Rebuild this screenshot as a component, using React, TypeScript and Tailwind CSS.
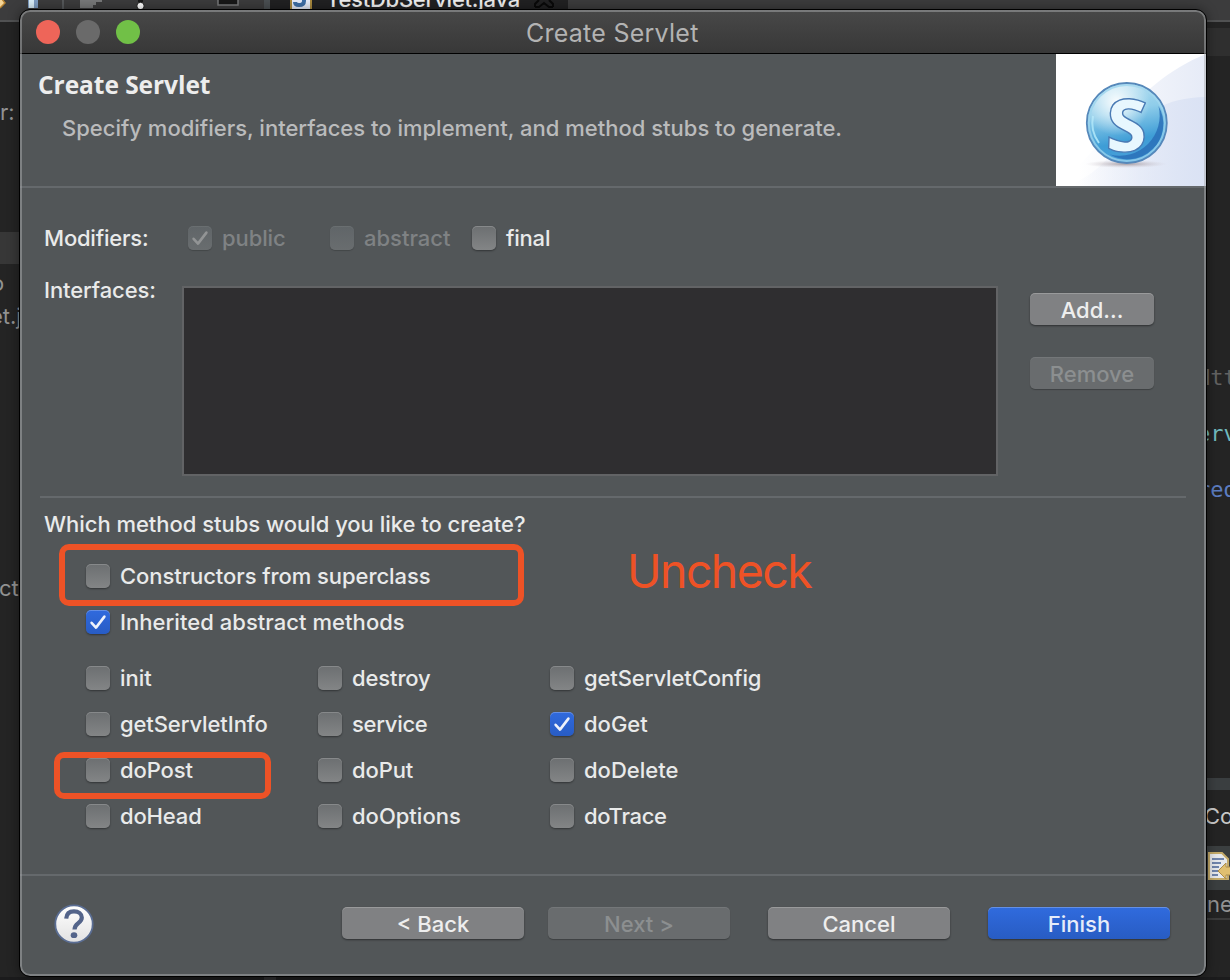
import type { ReactNode } from "react";

type Tone = "normal" | "disabled";

function Checkbox({ label, checked = false, tone = "normal", track = "" }: { label: string; checked?: boolean; tone?: Tone; track?: string }) {
  const off = tone === "disabled";
  const fill = off
    ? "bg-linear-to-b from-[#606568] to-[#696d6f] shadow-[0_1px_1px_rgba(0,0,0,0.18),inset_0_1px_0_rgba(255,255,255,0.06)]"
    : checked
      ? "bg-linear-to-b from-[#306ade] to-[#285cc4] shadow-[0_1px_2px_rgba(0,0,0,0.4),inset_0_1px_0_rgba(255,255,255,0.25)]"
      : "bg-linear-to-b from-[#6c6f71] to-[#838586] shadow-[0_1px_2px_rgba(0,0,0,0.4),inset_0_1px_0_rgba(255,255,255,0.18)]";
  return (
    <label className="flex h-6 items-center gap-[10px] whitespace-nowrap">
      <span className={`flex size-6 shrink-0 items-center justify-center rounded-[5px] ${fill}`}>
        {checked && (
          <svg viewBox="0 0 24 24" className="size-6" fill="none" stroke={off ? "#929495" : "#eef2fb"} strokeWidth="2.6" strokeLinecap="round" strokeLinejoin="round">
            <path d="M5.6 12.8 10 17.6 18.4 6.6" />
          </svg>
        )}
      </span>
      <span className={`${off ? "text-[#7f8284]" : "text-[#e9eaea]"} ${track}`}>{label}</span>
    </label>
  );
}

function Button({ children, kind = "normal", className = "" }: { children: ReactNode; kind?: "normal" | "disabled" | "primary"; className?: string }) {
  const look =
    kind === "primary"
      ? "bg-linear-to-b from-[#306bde] to-[#285cc3] text-[#e6ecf9] shadow-[0_1px_2px_rgba(0,0,0,0.45),inset_0_1px_0_rgba(255,255,255,0.25)]"
      : kind === "disabled"
        ? "bg-[#696c6e] text-[#8c8f90] shadow-[0_1px_1px_rgba(0,0,0,0.25),inset_0_1px_0_rgba(255,255,255,0.08)]"
        : "bg-[#808183] text-[#eeeeee] shadow-[0_1px_2px_rgba(0,0,0,0.45),inset_0_1px_0_rgba(255,255,255,0.2)]";
  return <button className={`flex h-8 items-center justify-center rounded-[5px] pt-px ${look} ${className}`}>{children}</button>;
}

function ServletBanner() {
  return (
    <svg viewBox="0 0 150 132" className="h-[132px] w-[150px] shrink-0">
      <defs>
        <linearGradient id="sweep" x1="0" x2="1" y1="0" y2="0">
          <stop offset="0.05" stopColor="#dce4f5" stopOpacity="0" />
          <stop offset="1" stopColor="#dae2f4" />
        </linearGradient>
        <linearGradient id="sweep2" x1="0" x2="1" y1="0" y2="0">
          <stop offset="0.15" stopColor="#e4e9f6" stopOpacity="0" />
          <stop offset="1" stopColor="#e6ebf7" />
        </linearGradient>
        <linearGradient id="ball" x1="0.4" x2="0.6" y1="0" y2="1">
          <stop offset="0" stopColor="#b5dff1" />
          <stop offset="0.35" stopColor="#8fcdea" />
          <stop offset="0.72" stopColor="#3e9dd6" />
          <stop offset="1" stopColor="#4b9fd8" />
        </linearGradient>
        <radialGradient id="gloss" cx="0.36" cy="0.22" r="0.45">
          <stop offset="0" stopColor="#fff" stopOpacity="0.95" />
          <stop offset="1" stopColor="#fff" stopOpacity="0" />
        </radialGradient>
        <radialGradient id="shade">
          <stop offset="0" stopColor="#8f8186" stopOpacity="0.75" />
          <stop offset="1" stopColor="#c8bfc6" stopOpacity="0" />
        </radialGradient>
      </defs>
      <rect width="150" height="132" fill="#fff" />
      <path d="M0 132C45 100 75 30 150 0V132Z" fill="url(#sweep2)" />
      <path d="M10 132C75 110 65 44 150 43V132Z" fill="url(#sweep)" />
      <ellipse cx="70" cy="110" rx="41" ry="4" fill="url(#shade)" />
      <circle cx="70.800" cy="69" r="40" fill="url(#ball)" stroke="#5688ba" strokeWidth="1.800" />
      <circle cx="70.800" cy="69" r="38" fill="none" stroke="#a5d8ef" strokeWidth="2" strokeOpacity="0.700" />
      <path d="M102.500 52A35.500 35.500 0 0 1 54 100.500A40 40 0 0 0 102.500 52Z" fill="#2a70b8" fillOpacity="0.850" />
      <path d="M37 62A34 34 0 0 0 43 89" fill="none" stroke="#a6e1f6" strokeWidth="2" />
      <circle cx="70.800" cy="69" r="37" fill="url(#gloss)" />
      <text x="70.800" y="97.500" textAnchor="middle" fontSize="73" fontWeight="800" transform="rotate(2 71 70)" fill="#e8f7fe" stroke="#497ab4" strokeWidth="1.400" fontFamily="Noto Sans, sans-serif">S</text>
    </svg>
  );
}

function Backdrop() {
  return (
    <div className="absolute inset-0 flex flex-col overflow-hidden bg-[#242424] text-[22px] text-[#929292]">
      <div className="flex h-[22px] shrink-0 border-b-2 border-[#515253] bg-[#3c3c3d]">
        <svg viewBox="0 0 270 10" className="h-[10px] w-[270px]">
          <path d="M-4-3 2-1 5 3 0 8" fill="#f5d598" stroke="#b68230" strokeWidth="1.500" />
          <path d="M28 0h10v8H28z" fill="#7e9cc0" />
          <path d="M29 0h5v8h-5z" fill="#d8ecf6" />
          <path d="M62 0h2v10h-2z" fill="#55585a" />
          <path d="M80 0h22v2h-6v3h-3v3H80z" fill="#777879" />
          <path d="M138 0h5v4h-5z" fill="#171717" />
          <circle cx="140.500" cy="6" r="3.700" fill="#fff" stroke="#171717" />
          <path d="M218-8h20V5h-20z" fill="#171717" stroke="#77787a" strokeWidth="1.500" />
          <path d="M264 0h6v10h-6z" fill="#4a4f52" />
        </svg>
        <div className="flex h-[10px] w-[298px] bg-[#212122]">
          <svg viewBox="0 0 50 10" className="h-[10px] w-[50px] shrink-0">
            <path d="M21-8h20V20H21z" fill="#e8eefa" stroke="#a8893e" strokeWidth="2" />
            <path d="M34-6V1q0 4-5 4-4 0-4-3" fill="none" stroke="#3f6fa6" strokeWidth="4" />
          </svg>
          <span className="mt-[-15px] ml-[6px] h-7 w-[194px] shrink-0 font-medium tracking-[-0.25px] whitespace-nowrap text-[#f0f0f0]">TestDbServlet.java</span>
          <svg viewBox="0 0 20 10" className="ml-[14px] h-[10px] w-5 shrink-0">
            <path d="M1 7V4L5 0M19 7V4L15 0M1 7h4l5-4 5 4h4" fill="none" stroke="#090909" strokeWidth="2" />
          </svg>
        </div>
      </div>
      <div className="flex flex-1 justify-between">
        <div className="flex w-5 flex-col overflow-hidden whitespace-nowrap">
          <span className="mt-[76px] h-7 leading-7">r:</span>
          <div className="mt-[106px] h-8 bg-[#373737]" />
          <span className="mt-[5px] -ml-[9px] h-7 leading-7">o</span>
          <span className="mt-[5px] -ml-[10px] h-7 leading-7">et.java</span>
          <span className="mt-[244px] -ml-px h-7 leading-7">ct</span>
        </div>
        <div className="flex w-6 flex-col overflow-hidden whitespace-nowrap">
          <div className="h-[6px] shrink-0 bg-[#242424]" />
          <div className="h-7 shrink-0 bg-[#2f2f2f]" />
          <div className="mt-[308px] -ml-[9px] h-[166px] shrink-0 font-['DejaVu_Sans_Mono',monospace] leading-7">
            <div className="h-14 text-[#626262]">Http</div>
            <div className="h-14 text-[#70b9be]">erv</div>
            <div className="h-14 text-[#5c7dc1]">red</div>
          </div>
          <div className="mt-[248px] h-3 shrink-0 bg-[#3a3e40]" />
          <div className="mt-3 -ml-[2px] h-7 shrink-0 leading-7 text-[#c8c8c8]">Co</div>
          <div className="mt-4 h-11 shrink-0 bg-[#3b3f40]">
            <svg viewBox="0 0 24 44" className="h-11 w-6">
              <path d="M3 7h13l6 6v20H3z" fill="#e7e9ec" stroke="#c4aa69" strokeWidth="2" />
              <path d="M6 13h12M6 17h9M6 21h7M6 25h7M6 29h6" stroke="#6f84ac" strokeWidth="2" />
              <path d="m12 25 8-8v4h7v8h-7v4z" fill="#e0bf70" stroke="#ac8c4b" />
            </svg>
          </div>
          <div className="h-[30px] shrink-0 border-b-2 border-[#3b3b3b] pl-px leading-7">ne</div>
        </div>
      </div>
      <div className="h-[3px] shrink-0 bg-[#1b1b1c] pl-[264px]">
        <div className="h-full w-3 bg-[#2c2c2d]" />
      </div>
    </div>
  );
}

const stubs = [
  { label: "init", track: "" },
  { label: "destroy", track: "tracking-[-0.12px]" },
  { label: "getServletConfig", track: "tracking-[-0.1px]" },
  { label: "getServletInfo", track: "tracking-[-0.1px]" },
  { label: "service", track: "tracking-[-0.28px]" },
  { label: "doGet", track: "", checked: true },
  { label: "doPost", track: "tracking-[-0.1px]" },
  { label: "doPut", track: "tracking-[-0.1px]" },
  { label: "doDelete", track: "" },
  { label: "doHead", track: "tracking-[-0.15px]" },
  { label: "doOptions", track: "" },
  { label: "doTrace", track: "tracking-[-0.3px]" },
];

export default function App() {
  return (
    <div className="relative h-[980px] w-[1230px] overflow-hidden font-[Inter,sans-serif] text-[22px] leading-7 text-[#e9eaea]">
      <Backdrop />
      <div className="absolute top-[10px] left-5 flex h-[966px] w-[1186px] flex-col overflow-hidden rounded-[10px] bg-[#525658] font-[450]">
        <div className="flex h-11 shrink-0 items-center border-b border-black bg-linear-to-b from-[#484848] to-[#383838] pl-4">
          <div className="flex w-[490px] gap-4">
            <span className="size-6 rounded-full bg-[#ee6559]" />
            <span className="size-6 rounded-full bg-[#6a6a6a]" />
            <span className="size-6 rounded-full bg-[#71c047]" />
          </div>
          <span className="pt-[2px] text-[25px] font-normal tracking-[0.25px] text-[#b3b3b3]">Create Servlet</span>
        </div>

        <div className="flex h-[134px] shrink-0 justify-between border-b-2 border-[#65696c]">
          <div className="pt-[17px] pl-[18px]">
            <div className="font-['Open_Sans',sans-serif] text-[24.5px] font-bold tracking-[-0.05px] text-[#ededed]">Create Servlet</div>
            <div className="mt-[15px] pl-6 whitespace-nowrap text-[#babbbc]">Specify modifiers, interfaces to implement, and method stubs to generate.</div>
          </div>
          <ServletBanner />
        </div>

        <div className="flex flex-1 flex-col pt-[38px] pl-6">
          <div className="flex h-6 items-center">
            <span className="w-[144px] tracking-[-0.2px]">Modifiers:</span>
            <div className="w-[142px]"><Checkbox label="public" checked tone="disabled" track="tracking-[-0.1px]" /></div>
            <div className="w-[142px]"><Checkbox label="abstract" tone="disabled" /></div>
            <Checkbox label="final" track="tracking-[-0.2px]" />
          </div>
          <div className="mt-9 flex">
            <span className="-mt-[10px] w-[138px] tracking-[-0.1px]">Interfaces:</span>
            <div className="h-[190px] w-[816px] border-2 border-[#626365] bg-[#2f2e30]" />
            <div className="ml-8 flex flex-col gap-8 pt-[7px]">
              <Button className="w-[124px]">Add...</Button>
              <Button className="w-[124px]" kind="disabled">Remove</Button>
            </div>
          </div>
          <div className="mt-[20px] -ml-1 h-[2px] w-[1146px] bg-[#65696c]" />

          <div className="mt-[12px] h-7 tracking-[-0.03px] whitespace-nowrap">Which method stubs would you like to create?</div>
          <div className="relative pl-[42px]">
            <div className="mt-[26px] flex flex-col gap-[22px]">
              <Checkbox label="Constructors from superclass" track="tracking-[-0.07px]" />
              <Checkbox label="Inherited abstract methods" checked track="tracking-[0.04px]" />
            </div>
            <div className="mt-8 grid grid-cols-[232px_232px_232px] gap-y-[22px]">
              {stubs.map((s) => (
                <Checkbox key={s.label} label={s.label} checked={s.checked} track={s.track} />
              ))}
            </div>
            <div className="absolute top-[6px] left-[15px] h-[62px] w-[465px] rounded-[10px] border-[6px] border-[#ee5226]" />
            <div className="absolute top-[214px] left-[10px] h-[47px] w-[217px] rounded-[10px] border-[6px] border-[#ee5226]" />
            <div className="absolute top-[5px] left-[583px] text-[46.5px] leading-[56px] font-normal tracking-[-1.6px] text-[#ee5226]">Uncheck</div>
          </div>
        </div>

        <div className="flex h-[102px] shrink-0 items-start border-t-2 border-[#65696c] pt-[31px] pl-[34px]">
          <svg viewBox="0 0 40 40" className="mt-[-3px] size-10">
            <defs>
              <linearGradient id="help" x1="0" x2="0" y1="0" y2="1">
                <stop offset="0" stopColor="#fff" />
                <stop offset="1" stopColor="#e2e2e2" />
              </linearGradient>
            </defs>
            <circle cx="20" cy="20" r="18.700" fill="url(#help)" stroke="#5a6d93" strokeWidth="1.800" />
            <path d="M12.200 14.600C12.600 9 16 7.300 20 7.300c4.600 0 7.800 2.500 7.800 6.300 0 5.900-7.300 5.400-7.300 12" fill="none" stroke="#53648a" strokeWidth="4.200" />
            <ellipse cx="20" cy="31.200" rx="3.300" ry="2.900" fill="#53648a" />
          </svg>
          <Button className="ml-[248px] w-[182px]">&lt; Back</Button>
          <Button className="ml-6 w-[182px]" kind="disabled">Next &gt;</Button>
          <Button className="ml-[38px] w-[182px]">Cancel</Button>
          <Button className="ml-[38px] w-[182px]" kind="primary">Finish</Button>
        </div>
      </div>
      <div className="pointer-events-none absolute top-[9px] left-[19px] h-[968px] w-[1188px] rounded-[11px] border border-black shadow-[inset_0_0_0_2px_rgba(170,172,174,0.5),0_0_12px_rgba(0,0,0,0.4)]" />
    </div>
  );
}
